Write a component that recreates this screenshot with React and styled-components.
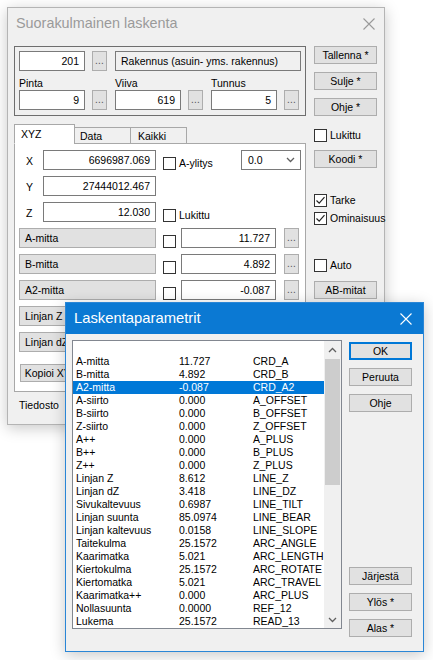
import React from 'react';
import styled, { createGlobalStyle } from 'styled-components';

const params = [
  ['A-mitta', '11.727', 'CRD_A'],
  ['B-mitta', '4.892', 'CRD_B'],
  ['A2-mitta', '-0.087', 'CRD_A2'],
  ['A-siirto', '0.000', 'A_OFFSET'],
  ['B-siirto', '0.000', 'B_OFFSET'],
  ['Z-siirto', '0.000', 'Z_OFFSET'],
  ['A++', '0.000', 'A_PLUS'],
  ['B++', '0.000', 'B_PLUS'],
  ['Z++', '0.000', 'Z_PLUS'],
  ['Linjan Z', '8.612', 'LINE_Z'],
  ['Linjan dZ', '3.418', 'LINE_DZ'],
  ['Sivukaltevuus', '0.6987', 'LINE_TILT'],
  ['Linjan suunta', '85.0974', 'LINE_BEAR'],
  ['Linjan kaltevuus', '0.0158', 'LINE_SLOPE'],
  ['Taitekulma', '25.1572', 'ARC_ANGLE'],
  ['Kaarimatka', '5.021', 'ARC_LENGTH'],
  ['Kiertokulma', '25.1572', 'ARC_ROTATE'],
  ['Kiertomatka', '5.021', 'ARC_TRAVEL'],
  ['Kaarimatka++', '0.000', 'ARC_PLUS'],
  ['Nollasuunta', '0.0000', 'REF_12'],
  ['Lukema', '25.1572', 'READ_13'],
];

const measures = [
  { label: 'A-mitta', value: '11.727' },
  { label: 'B-mitta', value: '4.892' },
  { label: 'A2-mitta', value: '-0.087' },
  { label: 'Linjan Z', value: '' },
  { label: 'Linjan dZ', value: '' },
];

const CloseIcon = ({ color }) => (
  <svg width="12" height="12" viewBox="0 0 12 12">
    <path d="M0.5 0.5 L11.5 11.5 M11.5 0.5 L0.5 11.5" stroke={color} strokeWidth="1.1" fill="none" />
  </svg>
);

const Checkbox = ({ checked }) => (
  <CheckBoxBox>
    {checked && (
      <svg width="11" height="11" viewBox="0 0 11 11">
        <path d="M1.5 5.5 L4.2 8.2 L9.5 2.2" stroke="#222" strokeWidth="1.2" fill="none" />
      </svg>
    )}
  </CheckBoxBox>
);

const Check = ({ checked, children, bottom }) => (
  <CheckLabel $bottom={bottom}>
    <Checkbox checked={checked} />
    {children && <span>{children}</span>}
  </CheckLabel>
);

const Chevron = ({ up }) => (
  <svg width="9" height="6" viewBox="0 0 9 6">
    <path d={up ? 'M1 5 L4.5 1.5 L8 5' : 'M1 1 L4.5 4.5 L8 1'} stroke="#606060" strokeWidth="1.3" fill="none" />
  </svg>
);

const App = () => {
  return (
    <>
      <GlobalStyle />
      <Desktop>
        <Window $left={7} $top={7} $width={378} $height={418}>
          <TitleBar $padRight={9}>
            <TitleText $size={14.4}>Suorakulmainen laskenta</TitleText>
            <CloseIcon color="#9a9a9a" />
          </TitleBar>
          <BackClient>
            <LeftCol>
              <GroupBox>
                <GroupRow>
                  <Cell>
                    <Edit $w={66}>201</Edit>
                    <Dots>...</Dots>
                  </Cell>
                  <Edit $w={186} $readonly $left>
                    Rakennus (asuin- yms. rakennus)
                  </Edit>
                </GroupRow>
                <LabelRow>
                  <span>Pinta</span>
                  <span>Viiva</span>
                  <span>Tunnus</span>
                </LabelRow>
                <GroupRow>
                  <Cell>
                    <Edit $w={66}>9</Edit>
                    <Dots>...</Dots>
                  </Cell>
                  <Cell>
                    <Edit $w={66}>619</Edit>
                    <Dots>...</Dots>
                  </Cell>
                  <Cell>
                    <Edit $w={66}>5</Edit>
                    <Dots>...</Dots>
                  </Cell>
                </GroupRow>
              </GroupBox>

              <TabStrip>
                <Tab $w={61} $selected $pad={6}>XYZ</Tab>
                <Tab $w={57} $pad={5}>Data</Tab>
                <Tab $w={57} $pad={7}>Kaikki</Tab>
              </TabStrip>
              <TabPanel>
                <CoordRow>
                  <AxisLabel>X</AxisLabel>
                  <Edit $w={113}>6696987.069</Edit>
                  <Check bottom>A-ylitys</Check>
                  <Combo>
                    <span>0.0</span>
                    <Chevron />
                  </Combo>
                </CoordRow>
                <CoordRow>
                  <AxisLabel>Y</AxisLabel>
                  <Edit $w={113}>27444012.467</Edit>
                </CoordRow>
                <CoordRow>
                  <AxisLabel>Z</AxisLabel>
                  <Edit $w={113}>12.030</Edit>
                  <Check bottom>Lukittu</Check>
                </CoordRow>
                {measures.map((m) => (
                  <MeasureRow key={m.label}>
                    <MeasureButton>{m.label}</MeasureButton>
                    <Check bottom />
                    <Edit $w={95}>{m.value}</Edit>
                    <Dots>...</Dots>
                  </MeasureRow>
                ))}
                <PushButton $w={62} $mt={6} $indent={1}>Kopioi XYZ</PushButton>
              </TabPanel>
              <FooterText>Tiedosto</FooterText>
            </LeftCol>

            <RightCol>
              <PushButton>Tallenna *</PushButton>
              <PushButton $mt={8}>Sulje *</PushButton>
              <PushButton $mt={8}>Ohje *</PushButton>
              <SideCheck $mt={13}><Check>Lukittu</Check></SideCheck>
              <PushButton $mt={8}>Koodi *</PushButton>
              <SideCheck $mt={26}><Check checked>Tarke</Check></SideCheck>
              <SideCheck $mt={5}><Check checked>Ominaisuus</Check></SideCheck>
              <SideCheck $mt={34}><Check>Auto</Check></SideCheck>
              <PushButton $mt={9}>AB-mitat</PushButton>
            </RightCol>
          </BackClient>
        </Window>

        <Window $left={65} $top={302} $width={359} $height={350} $active>
          <TitleBar $padRight={11} $active>
            <TitleText $size={14.8}>Laskentaparametrit</TitleText>
            <CloseIcon color="#ffffff" />
          </TitleBar>
          <FrontClient>
            <ListBox>
              <ListRows>
                {params.map(([name, value, code]) => (
                  <ListRow key={code} $selected={code === 'CRD_A2'}>
                    <span>{name}</span>
                    <span>{value}</span>
                    <span>{code}</span>
                  </ListRow>
                ))}
              </ListRows>
              <ScrollBar>
                <ScrollArrow><Chevron up /></ScrollArrow>
                <ScrollThumb />
                <ScrollTrack />
                <ScrollArrow><Chevron /></ScrollArrow>
              </ScrollBar>
            </ListBox>
            <ButtonColumn>
              <PushButton $default>OK</PushButton>
              <PushButton $mt={8}>Peruuta</PushButton>
              <PushButton $mt={8}>Ohje</PushButton>
              <BottomButtons>
                <PushButton>Järjestä</PushButton>
                <PushButton $mt={8}>Ylös *</PushButton>
                <PushButton $mt={8}>Alas *</PushButton>
              </BottomButtons>
            </ButtonColumn>
          </FrontClient>
        </Window>
      </Desktop>
    </>
  );
};

export default App;

const GlobalStyle = createGlobalStyle`
  html, body {
    margin: 0;
    padding: 0;
    background: #ffffff;
  }
  body {
    font-family: "Liberation Sans", Arial, sans-serif;
    font-size: 10.5px;
    color: #000;
  }
  * {
    box-sizing: border-box;
  }
`;

const Desktop = styled.div`
  position: relative;
  width: 433px;
  height: 660px;
  overflow: hidden;
  background: #ffffff;
`;

const Window = styled.div`
  position: absolute;
  left: ${(p) => p.$left}px;
  top: ${(p) => p.$top}px;
  width: ${(p) => p.$width}px;
  height: ${(p) => p.$height}px;
  display: flex;
  flex-direction: column;
  background: #f0f0f0;
  border: 1px solid ${(p) => (p.$active ? '#2a86d6' : '#b4b4b4')};
  box-shadow: 0 3px 14px rgba(0, 0, 0, 0.22);
`;

const TitleBar = styled.div`
  flex: none;
  height: 31px;
  display: flex;
  align-items: center;
  justify-content: space-between;
  padding: 0 ${(p) => p.$padRight}px 0 8px;
  background: ${(p) => (p.$active ? '#0b79d3' : '#f0f0f0')};
  color: ${(p) => (p.$active ? '#ffffff' : '#9a9a9a')};
`;

const TitleText = styled.span`
  font-size: ${(p) => p.$size}px;
  line-height: 1;
`;

const BackClient = styled.div`
  display: flex;
  gap: 8px;
  padding: 7px 7px 0 6px;
`;

const LeftCol = styled.div`
  width: 292px;
  display: flex;
  flex-direction: column;
`;

const RightCol = styled.div`
  width: 63px;
  display: flex;
  flex-direction: column;
  align-items: flex-start;
`;

const GroupBox = styled.div`
  height: 70px;
  border: 1px solid #6e6e6e;
  padding: 4px 4px 5px 4px;
  display: flex;
  flex-direction: column;
`;

const GroupRow = styled.div`
  display: flex;
  gap: 8px;
  height: 20px;
`;

const Cell = styled.div`
  width: 88px;
  display: flex;
  justify-content: space-between;
`;

const LabelRow = styled.div`
  height: 19px;
  display: grid;
  grid-template-columns: repeat(3, 96px);
  align-items: end;
  padding-bottom: 1px;
  line-height: 12px;
`;

const Edit = styled.div`
  width: ${(p) => p.$w}px;
  height: 20px;
  flex: none;
  display: flex;
  align-items: center;
  justify-content: ${(p) => (p.$left ? 'flex-start' : 'flex-end')};
  padding: 0 5px;
  background: ${(p) => (p.$readonly ? '#f0f0f0' : '#ffffff')};
  border: 1px solid #7a7a7a;
  white-space: nowrap;
  overflow: hidden;
`;

const Dots = styled.div`
  width: 15px;
  height: 20px;
  flex: none;
  display: flex;
  align-items: flex-end;
  justify-content: center;
  padding-bottom: 4px;
  background: #e1e1e1;
  border: 1px solid #adadad;
  color: #555;
  font-size: 10px;
  letter-spacing: 0.3px;
  line-height: 1;
`;

const TabStrip = styled.div`
  display: flex;
  align-items: flex-end;
  height: 20px;
  margin-top: 8px;
  margin-bottom: -1px;
  position: relative;
  z-index: 1;
`;

const Tab = styled.div`
  width: ${(p) => p.$w}px;
  height: ${(p) => (p.$selected ? 20 : 17)}px;
  margin-left: ${(p) => (p.$selected ? 0 : -1)}px;
  padding: ${(p) => (p.$selected ? 3 : 2)}px 0 0 ${(p) => p.$pad}px;
  background: ${(p) => (p.$selected ? '#ffffff' : '#f0f0f0')};
  border: 1px solid #a8a8a8;
  border-bottom: ${(p) => (p.$selected ? '1px solid #ffffff' : '1px solid #a8a8a8')};
  line-height: 12px;
`;

const TabPanel = styled.div`
  height: 249px;
  background: #ffffff;
  border: 1px solid #a8a8a8;
  padding: 6px 4px 9px 4px;
  display: flex;
  flex-direction: column;
  align-items: stretch;
  gap: 6px;
`;

const CoordRow = styled.div`
  display: flex;
  height: 20px;
  gap: 7px;
`;

const AxisLabel = styled.span`
  width: 17px;
  padding-left: 7px;
  display: flex;
  align-items: flex-end;
  padding-bottom: 3px;
  line-height: 12px;
`;

const CheckLabel = styled.label`
  display: flex;
  align-items: center;
  gap: 3px;
  align-self: ${(p) => (p.$bottom ? 'flex-end' : 'auto')};
  line-height: 13px;
  white-space: nowrap;
`;

const CheckBoxBox = styled.span`
  width: 13px;
  height: 13px;
  flex: none;
  display: flex;
  align-items: center;
  justify-content: center;
  background: #ffffff;
  border: 1px solid #333333;
`;

const Combo = styled.div`
  margin-left: auto;
  width: 60px;
  height: 20px;
  display: flex;
  align-items: center;
  justify-content: space-between;
  padding: 0 5px 0 6px;
  background: #ffffff;
  border: 1px solid #7a7a7a;
`;

const MeasureRow = styled.div`
  display: grid;
  grid-template-columns: 137px 13px 95px 15px;
  column-gap: 7px;
  height: 20px;
  & > :nth-child(3) {
    margin-left: -2px;
  }
  & > :nth-child(4) {
    margin-left: -1px;
  }
`;

const MeasureButton = styled.div`
  height: 20px;
  display: flex;
  align-items: center;
  padding-left: 5px;
  background: #e1e1e1;
  border: 1px solid #adadad;
`;

const PushButton = styled.div`
  width: ${(p) => p.$w || 63}px;
  height: 18px;
  flex: none;
  margin-top: ${(p) => p.$mt || 0}px;
  margin-left: ${(p) => p.$indent || 0}px;
  display: flex;
  align-items: center;
  justify-content: center;
  background: #e1e1e1;
  border: 1px solid ${(p) => (p.$default ? '#0078d7' : '#adadad')};
  box-shadow: ${(p) => (p.$default ? 'inset 0 0 0 1px #0078d7' : 'none')};
  white-space: nowrap;
  line-height: 1;
`;

const SideCheck = styled.div`
  margin-top: ${(p) => p.$mt}px;
`;

const FooterText = styled.div`
  margin-top: 7px;
  padding-left: 5px;
  line-height: 13px;
`;

const FrontClient = styled.div`
  flex: 1;
  display: flex;
  gap: 7px;
  padding: 6px 11px 14px 6px;
`;

const ListBox = styled.div`
  width: 270px;
  height: 289px;
  flex: none;
  display: flex;
  background: #ffffff;
  border: 1px solid #828790;
`;

const ListRows = styled.div`
  flex: 1;
  padding-top: 14px;
`;

const ListRow = styled.div`
  display: grid;
  grid-template-columns: 103px 74px 1fr;
  height: 13px;
  line-height: 13px;
  padding-left: 3px;
  white-space: nowrap;
  background: ${(p) => (p.$selected ? '#0078d7' : 'transparent')};
  color: ${(p) => (p.$selected ? '#ffffff' : '#000000')};
`;

const ScrollBar = styled.div`
  width: 17px;
  flex: none;
  display: flex;
  flex-direction: column;
  background: #f0f0f0;
`;

const ScrollArrow = styled.div`
  height: 17px;
  flex: none;
  display: flex;
  align-items: center;
  justify-content: center;
`;

const ScrollThumb = styled.div`
  height: 126px;
  margin: 1px 1px 0 1px;
  background: #cdcdcd;
`;

const ScrollTrack = styled.div`
  flex: 1;
`;

const ButtonColumn = styled.div`
  width: 63px;
  display: flex;
  flex-direction: column;
  padding-top: 2px;
`;

const BottomButtons = styled.div`
  margin-top: auto;
  display: flex;
  flex-direction: column;
`;
